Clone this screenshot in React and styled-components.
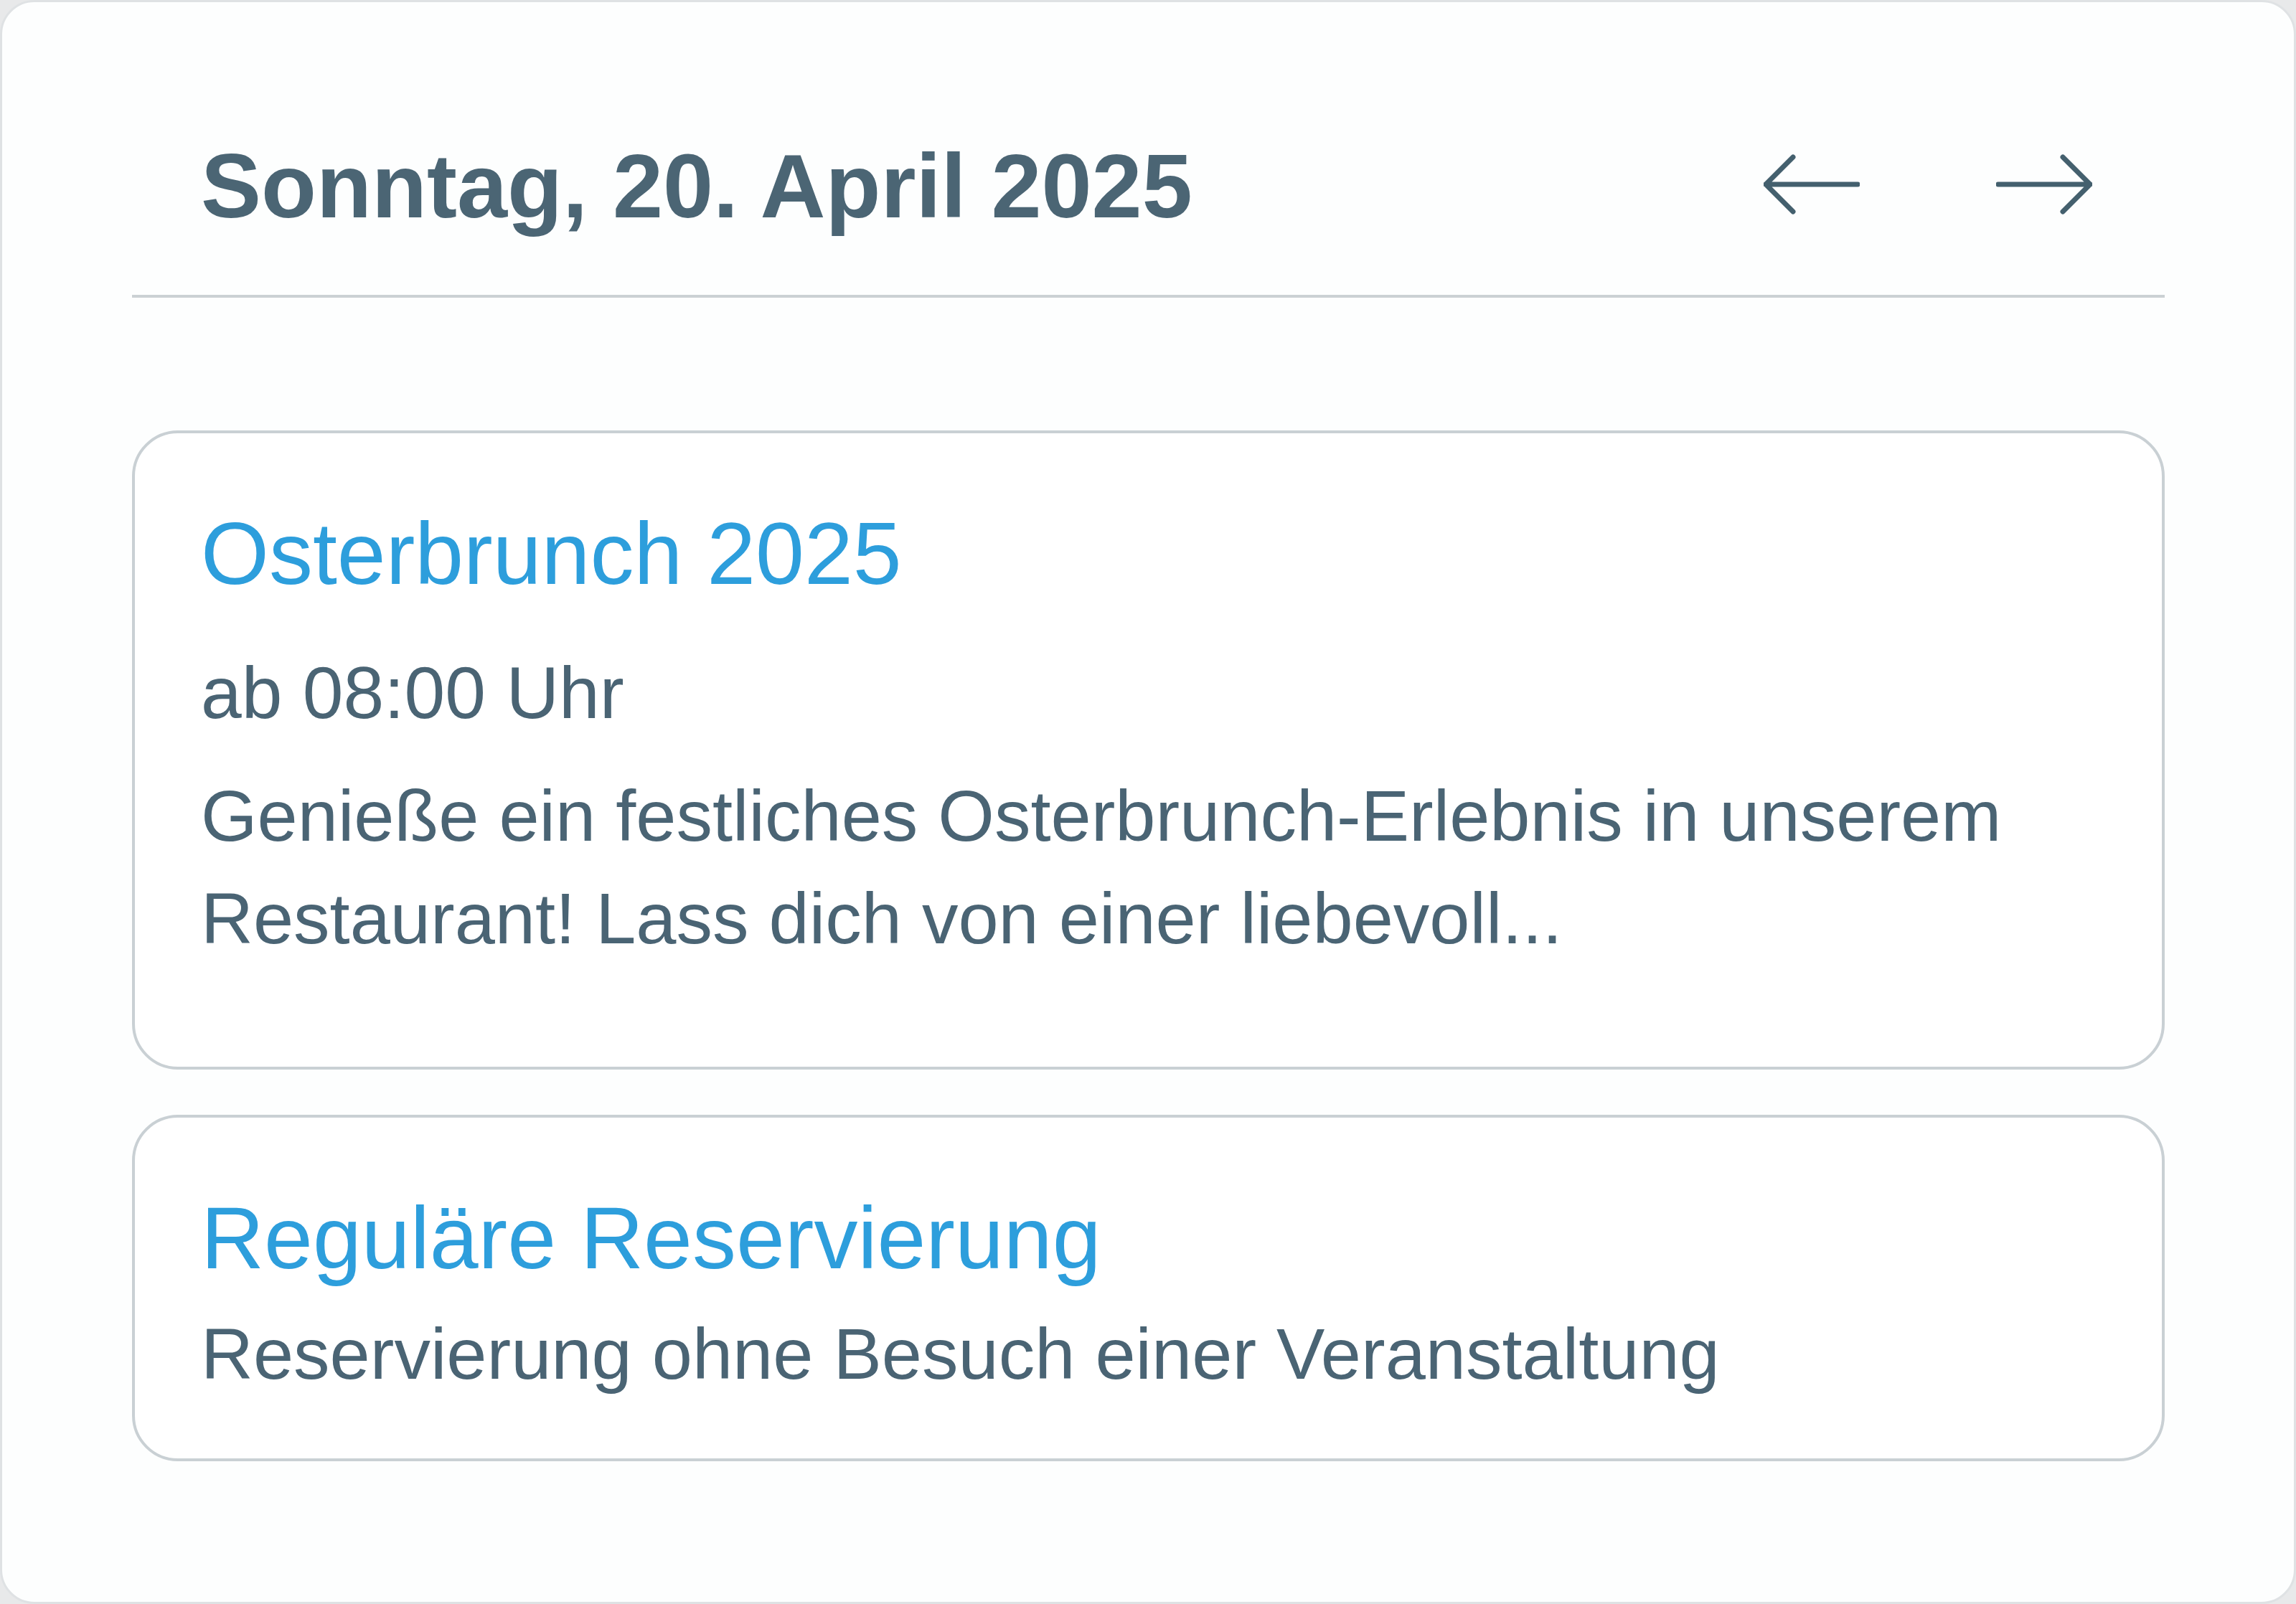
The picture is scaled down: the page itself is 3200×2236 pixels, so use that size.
import React from 'react'
import styled, { createGlobalStyle } from 'styled-components'

const GlobalStyle = createGlobalStyle`
    html, body {
        margin: 0;
        padding: 0;
        background: #e8e9ea;
    }
    body {
        font-family: "Liberation Sans", Arial, sans-serif;
    }
`

const ArrowIcon = ({ flip }) => (
  <Arrow $flip={flip} viewBox='0 0 134 84' width='134' height='84'>
    <path d='M41 4 L3 42 L41 80 M3 42 H131' />
  </Arrow>
)

const App = () => {
  return (
    <>
      <GlobalStyle />
      <Panel>
        <Header>
          <DayTitle>Sonntag, 20. April 2025</DayTitle>
          <Nav>
            <NavButton aria-label='Vorheriger Tag'>
              <ArrowIcon />
            </NavButton>
            <NavButton aria-label='Nächster Tag'>
              <ArrowIcon flip />
            </NavButton>
          </Nav>
        </Header>
        <List>
          <Card>
            <CardTitle>Osterbrunch 2025</CardTitle>
            <Time>ab 08:00 Uhr</Time>
            <Text $spaced>
              Genieße ein festliches Osterbrunch-Erlebnis in unserem Restaurant! Lass dich von einer liebevoll...
            </Text>
          </Card>
          <Card>
            <CardTitle>Reguläre Reservierung</CardTitle>
            <Text>Reservierung ohne Besuch einer Veranstaltung</Text>
          </Card>
        </List>
      </Panel>
    </>
  )
}

export default App

const Panel = styled.div`
    box-sizing: border-box;
    width: 3200px;
    height: 2236px;
    padding: 0 180px 0 181px;
    background: #fdfefe;
    border: 3px solid #dfe2e4;
    border-radius: 48px;
    color: #4a6474;
`
const Header = styled.div`
    display: flex;
    align-items: center;
    justify-content: space-between;
    height: 308px;
    padding: 100px 101px 0 96px;
    border-bottom: 4px solid #cbd1d4;
`
const DayTitle = styled.h1`
    margin: 5px 0 0;
    font-size: 126px;
    line-height: 1;
    font-weight: 700;
    color: #4b6574;
`
const Nav = styled.div`
    display: flex;
    align-items: center;
    gap: 190px;
`
const NavButton = styled.button`
    display: flex;
    padding: 0;
    border: none;
    background: none;
    color: #44606e;
    cursor: pointer;
`
const Arrow = styled.svg`
    display: block;
    fill: none;
    stroke: currentColor;
    stroke-width: 7;
    stroke-linecap: round;
    stroke-linejoin: round;
    transform: ${(p) => (p.$flip ? 'scaleX(-1)' : 'none')};
`
const List = styled.div`
    display: flex;
    flex-direction: column;
    gap: 63px;
    padding-top: 185px;
`
const Card = styled.div`
    padding: 95px 92px 74px;
    border: 4px solid #c9d0d4;
    border-radius: 64px;
    background: #fff;
`
const CardTitle = styled.h2`
    margin: 0 0 16px;
    font-size: 122px;
    line-height: 1.2;
    font-weight: 400;
    color: #2d9edc;
`
const Time = styled.div`
    margin: 50px 0 28px;
    font-size: 102px;
    line-height: 143px;
`
const Text = styled.p`
    margin: 0 0 ${(p) => (p.$spaced ? '61px' : '0')};
    font-size: 101px;
    line-height: 143px;
`
